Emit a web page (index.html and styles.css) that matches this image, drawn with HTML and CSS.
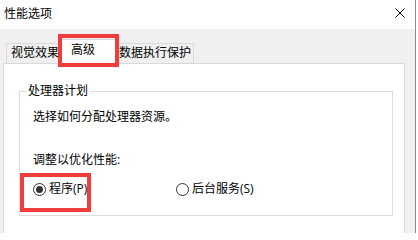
FILE: index.html
```html
<!DOCTYPE html>
<html lang="zh-CN">
<head>
<meta charset="utf-8">
<title>性能选项</title>
<link rel="stylesheet" href="styles.css">
</head>
<body>
<div class="window">
  <div class="titlebar">
    <span class="title">性能选项</span>
    <span class="close">
      <svg width="10" height="10" viewBox="0 0 10 10"><path d="M0.5 0.5 L9.5 9.5 M9.5 0.5 L0.5 9.5" stroke="#000" stroke-width="1" fill="none"/></svg>
    </span>
  </div>
  <div class="content">
    <div class="tabstrip">
      <div class="tab tab-visual">视觉效果</div>
      <div class="tab tab-active">高级</div>
      <div class="tab tab-dep">数据执行保护</div>
    </div>
    <div class="panel">
      <fieldset class="group">
        <legend class="legend">处理器计划</legend>
        <div class="group-body">
          <div class="line desc">选择如何分配处理器资源。</div>
          <div class="line adjust">调整以优化性能:</div>
          <div class="radios">
            <div class="radio radio-first"><span class="dot checked"></span><span>程序(P)</span></div>
            <div class="radio"><span class="dot"></span><span>后台服务(S)</span></div>
          </div>
        </div>
      </fieldset>
    </div>
  </div>
  <div class="mark mark-tab"></div>
  <div class="mark mark-radio"></div>
</div>
</body>
</html>
```
FILE: styles.css
```css
html, body {
  margin: 0;
  padding: 0;
  background: #ffffff;
}
body {
  width: 418px;
  height: 233px;
  overflow: hidden;
  font-family: "Open Sans", "Noto Sans CJK SC", sans-serif;
  font-size: 12px;
  color: #000;
}
.window {
  position: relative;
  width: 415px;
  height: 233px;
  border-right: 1px solid #8c8c8c;
  overflow: hidden;
}
.titlebar {
  height: 29px;
  background: #fff;
  display: flex;
  align-items: center;
  justify-content: space-between;
  padding: 0 10px 0 4px;
}
.title {
  line-height: 16px;
  margin-top: -1px;
}
.close {
  display: flex;
  width: 10px;
  height: 10px;
  margin-top: -3px;
}
.content {
  background: #f0f0f0;
  height: 204px;
  padding-top: 10px;
  box-sizing: border-box;
}
.tabstrip {
  display: flex;
  align-items: flex-start;
  height: 25px;
  padding-left: 6px;
}
.tab {
  box-sizing: border-box;
  border: 1px solid #d9d9d9;
  border-bottom: none;
  background: #f0f0f0;
  line-height: 16px;
  white-space: nowrap;
}
.tab-visual {
  width: 52px;
  height: 20px;
  margin-top: 4px;
  padding: 1px 0 0 4px;
  border-right: none;
}
.tab-active {
  position: relative;
  z-index: 2;
  width: 56px;
  height: 25px;
  margin-left: 2px;
  padding: 2px 0 0 10px;
  background: #fff;
}
.tab-dep {
  width: 80px;
  height: 20px;
  margin-top: 4px;
  margin-left: -2px;
  padding: 1px 0 0 4px;
}
.panel {
  margin: -1px 0 0 3px;
  width: 402px;
  height: 180px;
  box-sizing: border-box;
  border: 1px solid #d9d9d9;
  background: #fff;
  padding: 20px 0 0 15px;
}
.group {
  margin: 0;
  width: 374px;
  box-sizing: border-box;
  border: 1px solid #dcdcdc;
  padding: 0 0 18px 0;
  min-width: 0;
}
.legend {
  margin-left: 6px;
  padding: 0 2px;
  line-height: 14px;
}
.group-body {
  padding-left: 13px;
}
.line {
  line-height: 16px;
}
.desc {
  margin-top: 11px;
}
.adjust {
  margin-top: 27px;
}
.radios {
  display: flex;
  margin-top: 13px;
  line-height: 16px;
}
.radio {
  display: flex;
  align-items: center;
  gap: 3px;
}
.radio-first {
  width: 143px;
}
.dot {
  width: 13px;
  height: 13px;
  box-sizing: border-box;
  border: 1px solid #333;
  border-radius: 50%;
  display: flex;
  align-items: center;
  justify-content: center;
  background: #fff;
}
.dot.checked::after {
  content: "";
  width: 7px;
  height: 7px;
  border-radius: 50%;
  background: #333;
}
.mark {
  position: absolute;
  box-sizing: border-box;
  border: 4px solid #f23b3b;
  z-index: 5;
}
.mark-tab {
  left: 58px;
  top: 34px;
  width: 61px;
  height: 33px;
}
.mark-radio {
  left: 20px;
  top: 173px;
  width: 71px;
  height: 39px;
}
```
